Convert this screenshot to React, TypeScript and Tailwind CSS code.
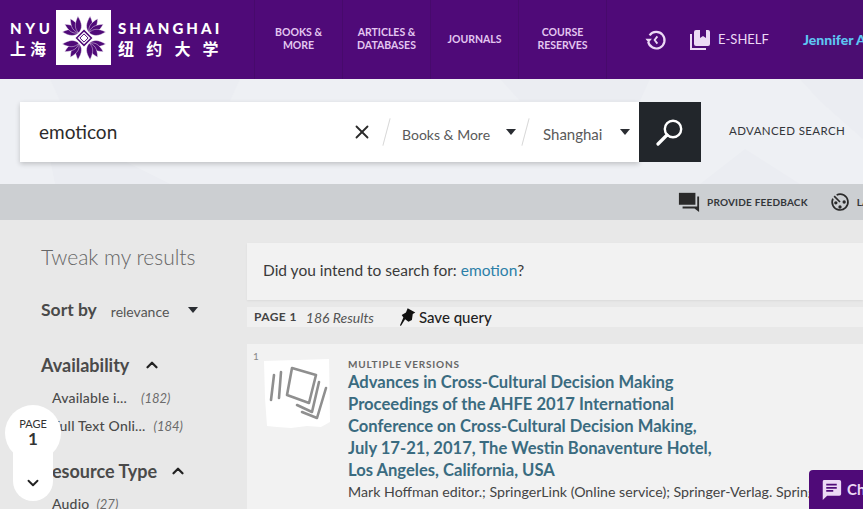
import { X, ChevronUp, ChevronDown } from 'lucide-react'

function Flower() {
  const corners = [45, 135, 225, 315]
  const fan = [-42, -14, 14, 42]
  return (
    <svg viewBox="0 0 56 56" className="w-[46px] h-[46px]">
      {corners.map((deg) => (
        <g key={deg} transform={`rotate(${deg} 28 28)`}>
          {fan.map((f) => (
            <g key={f} transform={`rotate(${f} 28 19)`}>
              <path d="M28 19 C23 14 23 8 28 -1 C33 8 33 14 28 19Z" fill="#4f0a78" stroke="#fff" strokeWidth="0.5" />
            </g>
          ))}
        </g>
      ))}
      <path d="M28 19 L37 28 L28 37 L19 28Z" fill="#fff" stroke="#4f0a78" strokeWidth="1.8" />
      <path d="M28 23 L33 28 L28 33 L23 28Z" fill="#fff" stroke="#4f0a78" strokeWidth="1.2" />
    </svg>
  )
}

function NavItem({ lines }: { lines: string[] }) {
  return (
    <div className="w-[88px] h-full shrink-0 flex flex-col items-center justify-center pb-[1px] border-r border-[#470a6c] text-[10.5px] leading-[13px] font-bold text-[#e3c6f0]">
      {lines.map((l) => (
        <span key={l}>{l}</span>
      ))}
    </div>
  )
}

function Header() {
  return (
    <div className="h-[79px] bg-[#4f0a78] flex items-stretch overflow-hidden">
      <div className="w-[255px] shrink-0 flex items-center pl-[10px] pb-[4px] text-white font-bold border-r border-[#470a6c]">
        <div className="flex flex-col w-[40px] font-['Noto_Sans_CJK_SC',sans-serif]">
          <span className="text-[15px] leading-[20px] tracking-[3.6px] font-['Lato',sans-serif] font-black">NYU</span>
          <span className="text-[16px] leading-[20px] tracking-[4px] whitespace-nowrap">上海</span>
        </div>
        <div className="w-[55px] h-[55px] bg-white ml-[6px] flex items-center justify-center shrink-0">
          <Flower />
        </div>
        <div className="flex flex-col ml-[7px] font-['Noto_Sans_CJK_SC',sans-serif]">
          <span className="text-[15px] leading-[20px] tracking-[3.1px] font-['Lato',sans-serif] font-black whitespace-nowrap">SHANGHAI</span>
          <span className="text-[16px] leading-[20px] tracking-[12.2px] whitespace-nowrap">纽约大学</span>
        </div>
      </div>
      <NavItem lines={['BOOKS &', 'MORE']} />
      <NavItem lines={['ARTICLES &', 'DATABASES']} />
      <NavItem lines={['JOURNALS']} />
      <NavItem lines={['COURSE', 'RESERVES']} />
      <div className="flex items-center pl-[38px] w-[183px] shrink-0">
        <svg viewBox="0 0 24 24" className="w-[22px] h-[22px] text-[#ecd9f5] shrink-0" fill="none" stroke="currentColor" strokeWidth="2.4">
          <path d="M5 7 A9 9 0 1 1 3.5 14" />
          <path d="M0.5 10.5 H7.5 L4 15Z" fill="currentColor" stroke="none" />
          <path d="M13.5 8 L10.5 12 L13.5 16" strokeWidth="2" />
        </svg>
        <svg viewBox="0 0 24 24" className="w-[24px] h-[24px] ml-[21px] text-[#ecd9f5] shrink-0" fill="currentColor">
          <path d="M4 6H2v16h16v-2H4V6z" />
          <path d="M8 2a2 2 0 0 0-2 2v12a2 2 0 0 0 2 2h12a2 2 0 0 0 2-2V4a2 2 0 0 0-2-2h-2v8l-3-2-3 2V2H8z" />
        </svg>
        <span className="ml-[6px] text-[13px] text-[#ecd9f5]">E-SHELF</span>
      </div>
      <div className="flex-1 min-w-0 flex items-center pl-[13px] whitespace-nowrap text-[14px] font-black text-[#5ec5f2] bg-[#4b0d72]">
        Jennifer A
      </div>
    </div>
  )
}

function Caret() {
  return <div className="w-0 h-0 shrink-0 border-l-[5.5px] border-r-[5.5px] border-t-[6px] border-l-transparent border-r-transparent border-t-[#2a2d32]" />
}

function Slash() {
  return <div className="w-px h-[28px] bg-[#d8d8d8] rotate-[15deg]" />
}

function SearchBar() {
  return (
    <div className="relative h-[105px] bg-[#eef0f4]">
      <svg viewBox="0 0 863 105" className="absolute inset-0 w-full h-full" fill="#ebedf2">
        <path d="M50 0 H240 L230 22 H60Z" />
        <path d="M170 105 L120 80 H50 L55 105Z" />
        <path d="M500 0 H650 L640 22 H520Z" />
        <path d="M700 105 L745 70 L800 105Z" />
        <path d="M800 0 H863 V60 L820 22Z" />
      </svg>
      <div className="relative flex items-start pt-[23px] pl-[20px]">
        <div className="w-[619px] h-[60px] bg-white shadow-[0_2px_5px_rgba(0,0,0,0.2)] flex items-center shrink-0">
          <span className="pl-[19px] w-[331px] text-[19px] text-[#2b2b2b]">emoticon</span>
          <X className="w-[22px] h-[22px] text-[#2a2a2a] shrink-0" strokeWidth={2} />
          <div className="ml-[13px]"><Slash /></div>
          <span className="ml-[15px] mt-[5px] w-[104px] text-[14px] text-[#5a5a5a] whitespace-nowrap">Books &amp; More</span>
          <Caret />
          <div className="ml-[9px]"><Slash /></div>
          <span className="ml-[17px] mt-[5px] w-[77px] text-[15px] text-[#5a5a5a]">Shanghai</span>
          <Caret />
        </div>
        <div className="w-[62px] h-[60px] bg-[#22262b] flex items-center justify-center shrink-0">
          <svg viewBox="0 0 28 28" className="w-[28px] h-[28px]" fill="none" stroke="#fff">
            <circle cx="17" cy="11" r="8.2" strokeWidth="2.4" />
            <path d="M11 17 L2 26" strokeWidth="3.2" strokeLinecap="round" />
          </svg>
        </div>
        <span className="ml-[28px] mt-[21px] text-[11.5px] leading-[16px] text-[#33363a] tracking-[0.4px] whitespace-nowrap">ADVANCED SEARCH</span>
      </div>
    </div>
  )
}

function ToolBar() {
  return (
    <div className="h-[36px] bg-[#cccfd2] flex items-center pl-[678px] whitespace-nowrap overflow-hidden">
      <svg viewBox="0 0 24 24" className="w-[22px] h-[22px] text-[#2a2a2a] shrink-0" fill="currentColor">
        <path d="M1 2h18v13H1V2z" />
        <path d="M21 6h2v17l-5-4H5v-2h16V6z" />
      </svg>
      <span className="ml-[7px] text-[10px] font-bold tracking-[0.2px] text-[#33363a]">PROVIDE FEEDBACK</span>
      <svg viewBox="0 0 24 24" className="ml-[22px] w-[20px] h-[20px] text-[#2a2a2a] shrink-0" fill="none" stroke="currentColor" strokeWidth="2">
        <path d="M8 3.5 A9.5 9.5 0 1 1 3.5 8" />
        <path d="M5 5 L12 12" />
        <circle cx="7" cy="13" r="1" fill="currentColor" />
        <circle cx="17" cy="12" r="1" fill="currentColor" />
        <circle cx="12" cy="18" r="1" fill="currentColor" />
      </svg>
      <span className="ml-[7px] text-[10px] font-bold text-[#33363a]">LAST</span>
    </div>
  )
}

function FacetItem({ label, count, gap }: { label: string; count: string; gap: string }) {
  return (
    <div className="flex items-baseline whitespace-nowrap text-[14px] leading-[28px] text-[#4a4a4a]">
      <span className="font-medium tracking-[0.2px]">{label}</span>
      <span className={`${gap} italic text-[13px] text-[#6b6b6b]`}>({count})</span>
    </div>
  )
}

function Sidebar() {
  return (
    <div className="w-[247px] shrink-0 pl-[41px] pt-[23px] text-[#4a4a4a]">
      <div className="text-[21px] leading-[28px] font-light text-[#666]">Tweak my results</div>
      <div className="flex items-center mt-[26px]">
        <span className="text-[17.5px] font-bold leading-[24px]">Sort by</span>
        <span className="ml-[14px] mt-[4px] text-[14px] text-[#555]">relevance</span>
        <div className="ml-[19px]"><Caret /></div>
      </div>
      <div className="flex items-center mt-[31px]">
        <span className="text-[18px] font-bold leading-[24px]">Availability</span>
        <ChevronUp className="ml-[14px] w-[18px] h-[18px] text-[#222]" strokeWidth={3} />
      </div>
      <div className="pl-[11px] mt-[7px]">
        <FacetItem label="Available i..." count="182" gap="ml-[14px]" />
        <FacetItem label="Full Text Onli..." count="184" gap="ml-[8px]" />
      </div>
      <div className="flex items-center mt-[19px]">
        <span className="text-[18px] font-bold leading-[24px]">Resource Type</span>
        <ChevronUp className="ml-[12px] w-[18px] h-[18px] text-[#222]" strokeWidth={3} />
      </div>
      <div className="pl-[11px] mt-[7px]">
        <FacetItem label="Audio" count="27" gap="ml-[7px]" />
      </div>
    </div>
  )
}

function Thumb() {
  return (
    <svg viewBox="0 0 67 72" className="w-[67px] h-[72px] shrink-0">
      <path d="M1 3 L66 1 L67 64 L58 69 L44 68 L28 70 L14 69 L4 68 L2 40Z" fill="#fff" />
      <g fill="none" stroke="#8f8f8f" strokeWidth="2.6" strokeLinejoin="round" strokeLinecap="round">
        <path d="M11 17 L8 42" />
        <path d="M18 14 L16 40" />
        <path d="M56 24 L49 54 L34 47" />
        <path d="M63 30 L54 60 L39 54" />
        <path d="M29 10 L53 17 L46 45 L24 37Z" />
      </g>
    </svg>
  )
}

function Results() {
  return (
    <div className="flex-1 min-w-0 pt-[23px]">
      <div className="h-[57px] bg-[#f2f2f2] flex items-center pl-[16px] pb-[2px] text-[15.5px] text-[#3a3a3a] shadow-[0_1px_2px_rgba(0,0,0,0.06)]">
        Did you intend to search for:&nbsp;<span className="text-[#2c7fa8]">emotion</span>?
      </div>
      <div className="h-[20px] mt-[7px] bg-[#f0f0f0] flex items-center pl-[7px] whitespace-nowrap">
        <span className="text-[12px] font-bold tracking-[0.4px] text-[#444]">PAGE 1</span>
        <span className="ml-[9px] text-[14px] italic text-[#555]">186 Results</span>
        <svg viewBox="0 0 20 24" className="ml-[26px] w-[17px] h-[21px] shrink-0" fill="#111">
          <path d="M9 1 L18 6 L15 8 L14 15 L10 17 L6 14 L1 22 L0 21 L4 12 L2 9 L7 6Z" />
        </svg>
        <span className="ml-[2px] text-[15px] font-medium text-[#222]">Save query</span>
      </div>
      <div className="mt-[17px] h-[200px] bg-[#f2f2f2] flex pl-[6px] pt-[6px] overflow-hidden">
        <span className="text-[10px] leading-[12px] text-[#888] w-[10px] shrink-0">1</span>
        <div className="mt-[8px]"><Thumb /></div>
        <div className="ml-[18px] min-w-0 pt-[6px]">
          <div className="text-[10px] font-bold tracking-[0.8px] leading-[16px] text-[#666]">MULTIPLE VERSIONS</div>
          <div className="text-[16.6px] leading-[22px] font-bold text-[#3a6b80] -mt-[1px]">
            <div className="whitespace-nowrap">Advances in Cross-Cultural Decision Making</div>
            <div className="whitespace-nowrap">Proceedings of the AHFE 2017 International</div>
            <div className="whitespace-nowrap">Conference on Cross-Cultural Decision Making,</div>
            <div className="whitespace-nowrap">July 17-21, 2017, The Westin Bonaventure Hotel,</div>
            <div className="whitespace-nowrap">Los Angeles, California, USA</div>
          </div>
          <div className="mt-[1px] text-[14.2px] leading-[20px] text-[#444] whitespace-nowrap">
            Mark Hoffman editor.; SpringerLink (Online service); Springer-Verlag. Springer
          </div>
        </div>
      </div>
    </div>
  )
}

export default function App() {
  return (
    <div className="relative w-[863px] h-[509px] overflow-hidden bg-[#e8e8e8] font-['Lato','Liberation_Sans',sans-serif]">
      <Header />
      <SearchBar />
      <ToolBar />
      <div className="flex">
        <Sidebar />
        <Results />
      </div>

      <div className="absolute left-[13px] top-[440px] w-[40px] h-[61px] rounded-b-[20px] bg-white flex items-end justify-center pb-[9px]">
        <ChevronDown className="w-[18px] h-[18px] text-[#222]" strokeWidth={2.5} />
      </div>
      <div className="absolute left-[5px] top-[405px] w-[56px] h-[56px] rounded-full bg-white flex flex-col items-center justify-center pb-[3px] text-[#333]">
        <span className="text-[11px] leading-[13px]">PAGE</span>
        <span className="text-[17px] leading-[17px] font-bold">1</span>
      </div>

      <div className="absolute left-[809px] top-[470px] w-[70px] h-[39px] rounded-tl-[4px] bg-[#4f0a78] flex items-center pl-[12px]">
        <svg viewBox="0 0 24 24" className="w-[21px] h-[21px] shrink-0">
          <path d="M3 1h18a2 2 0 0 1 2 2v14a2 2 0 0 1-2 2H7l-5 5V3a2 2 0 0 1 1-2z" fill="#ecd9f5" />
          <path d="M6 6.5h12M6 10h12M6 13.5h8" stroke="#4f0a78" strokeWidth="2" />
        </svg>
        <span className="ml-[5px] text-[15px] font-bold text-[#ecd9f5]">Chat</span>
      </div>
    </div>
  )
}
